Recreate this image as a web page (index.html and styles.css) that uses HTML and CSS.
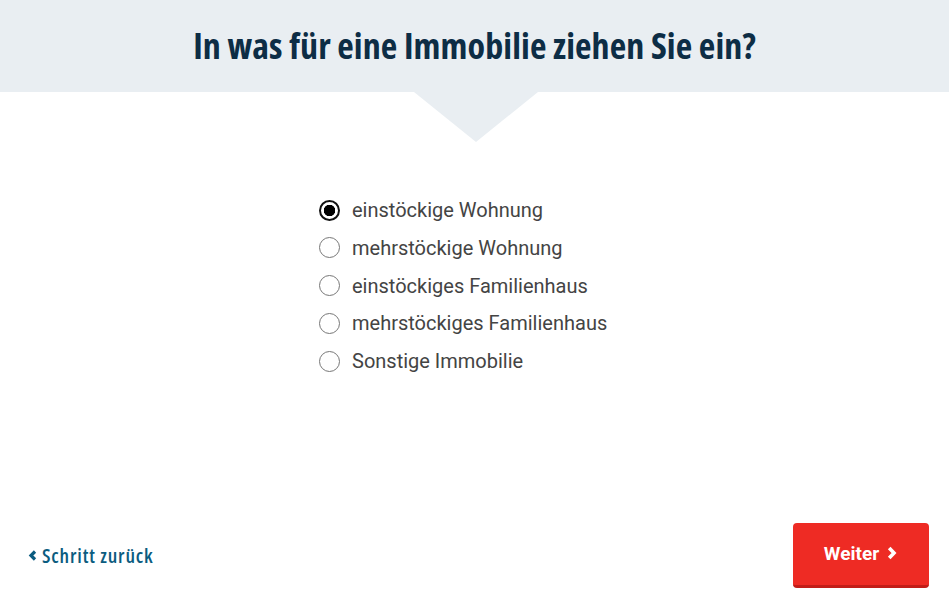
FILE: index.html
```html
<!DOCTYPE html>
<html lang="de">
<head>
    <meta charset="UTF-8">
    <meta name="viewport" content="width=device-width, initial-scale=1.0">
    <title>Umzug - Immobilie</title>
    <link rel="stylesheet" href="styles.css">
</head>
<body>
    <div class="page">
        <header class="question">
            <h1>In was für eine Immobilie ziehen Sie ein?</h1>
            <span class="arrow"></span>
        </header>
        <form class="options" id="propertyForm">
            <label class="option"><input type="radio" name="property" value="1" checked><span>einstöckige Wohnung</span></label>
            <label class="option"><input type="radio" name="property" value="2"><span>mehrstöckige Wohnung</span></label>
            <label class="option"><input type="radio" name="property" value="3"><span>einstöckiges Familienhaus</span></label>
            <label class="option"><input type="radio" name="property" value="4"><span>mehrstöckiges Familienhaus</span></label>
            <label class="option"><input type="radio" name="property" value="5"><span>Sonstige Immobilie</span></label>
        </form>
        <div class="nav">
            <a href="#" class="back">
                <svg width="10" height="13" viewBox="0 0 10 13"><path d="M7 2.5 L3 6.5 L7 10.5" fill="none" stroke="currentColor" stroke-width="3.2"/></svg>
                Schritt zurück
            </a>
            <button type="button" class="next">Weiter
                <svg width="12" height="14" viewBox="0 0 12 14"><path d="M3.2 2 L8 7 L3.2 12" fill="none" stroke="currentColor" stroke-width="3.6"/></svg>
            </button>
        </div>
    </div>
</body>
</html>
```

FILE: styles.css
```css
body {
    margin: 0;
    font-family: Roboto, "Liberation Sans", sans-serif;
    background: #ffffff;
    color: #444444;
}
.page {
    display: flex;
    flex-direction: column;
    height: 612px;
}
.question {
    position: relative;
    background: #e9eef2;
    height: 92px;
    display: flex;
    align-items: center;
    justify-content: center;
}
.question h1 {
    margin: 0;
    padding-bottom: 2px;
    font-family: "Open Sans", sans-serif;
    font-stretch: 75%;
    font-size: 36px;
    font-weight: bold;
    letter-spacing: 0.1px;
    color: #0d2d45;
}
.arrow {
    position: absolute;
    left: 414px;
    top: 92px;
    width: 0;
    height: 0;
    border-left: 62px solid transparent;
    border-right: 62px solid transparent;
    border-top: 50px solid #e9eef2;
}
.options {
    display: flex;
    flex-direction: column;
    gap: 13.75px;
    margin: 106px 0 0 319px;
}
.option {
    display: flex;
    align-items: center;
    gap: 12px;
    font-size: 20px;
    height: 24px;
    cursor: pointer;
}
.option input {
    appearance: none;
    width: 21px;
    height: 21px;
    margin: 0;
    border: 1px solid #777;
    border-radius: 50%;
    background: #fff;
}
.option input:checked {
    border: 2px solid #111;
    background: radial-gradient(circle, #000 5.5px, #fff 6px);
}
.nav {
    margin-top: auto;
    display: flex;
    align-items: center;
    justify-content: space-between;
    padding: 0 20px 24px 28px;
}
.back {
    display: flex;
    align-items: center;
    gap: 4px;
    color: #0b5c80;
    text-decoration: none;
    font-family: "Open Sans", sans-serif;
    font-stretch: 75%;
    font-size: 20px;
    font-weight: 600;
    letter-spacing: 0.85px;
}
.next {
    width: 136px;
    height: 65px;
    display: flex;
    align-items: center;
    justify-content: center;
    gap: 7px;
    padding: 0 0 2px 0;
    background: #ee2b24;
    border: none;
    border-bottom: 3px solid #c21d18;
    border-radius: 4px;
    color: #fff;
    font-family: Roboto, sans-serif;
    font-weight: bold;
    font-size: 19px;
    cursor: pointer;
}
```
